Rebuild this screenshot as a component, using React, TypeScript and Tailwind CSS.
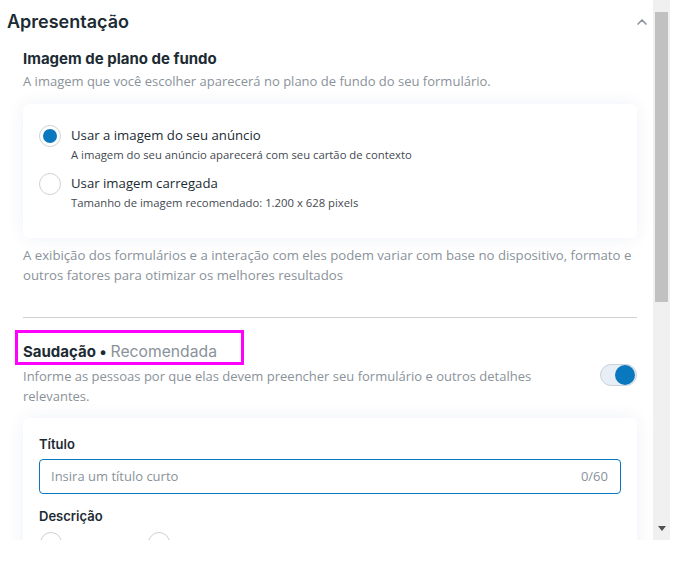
import { ChevronUp } from "lucide-react";

const body = { fontFamily: '"Open Sans", "Noto Sans", sans-serif' };
const head = { fontFamily: 'Inter, "Noto Sans", sans-serif' };

function Radio({ checked }: { checked?: boolean }) {
  return (
    <span className="flex h-[22px] w-[22px] shrink-0 items-center justify-center rounded-full border border-[#cbd2d9] bg-white">
      {checked && <span className="h-[14px] w-[14px] rounded-full bg-[#0a78be]" />}
    </span>
  );
}

function RadioOption({ checked, label, hint }: { checked?: boolean; label: string; hint: string }) {
  return (
    <div className="flex items-start gap-[10px]">
      <Radio checked={checked} />
      <div className="flex flex-col">
        <span className="text-[13.2px] leading-[20px] text-[#1c2b33]">{label}</span>
        <span className="text-[11.3px] leading-[20px] text-[#444950]">{hint}</span>
      </div>
    </div>
  );
}

export default function App() {
  return (
    <div className="flex h-[564px] w-[675px] items-start bg-white" style={body}>
      <div className="h-[540px] w-[653px] overflow-hidden">
        {/* Apresentação */}
        <div className="flex items-center justify-between pl-[7px] pr-[3px] pt-[10px]">
          <h1 className="text-[18px] font-semibold leading-[24px] text-[#1c2b33]" style={head}>
            Apresentação
          </h1>
          <ChevronUp size={16} strokeWidth={2.5} className="text-[#8d949e]" />
        </div>

        <div className="pl-[23px] pr-[16px]">
          <h2 className="mt-[15px] text-[15px] font-bold leading-[20px] text-[#1c2b33]" style={head}>
            Imagem de plano de fundo
          </h2>
          <p className="mt-[2px] text-[13px] leading-[20px] text-[#8a929a]">
            A imagem que você escolher aparecerá no plano de fundo do seu formulário.
          </p>

          <div className="mt-[13px] flex flex-col gap-[8px] rounded-[6px] bg-white px-[16px] pb-[25px] pt-[21px] shadow-[0_0_18px_rgba(30,60,140,0.07)]">
            <RadioOption
              checked
              label="Usar a imagem do seu anúncio"
              hint="A imagem do seu anúncio aparecerá com seu cartão de contexto"
            />
            <RadioOption
              label="Usar imagem carregada"
              hint="Tamanho de imagem recomendado: 1.200 x 628 pixels"
            />
          </div>

          <p className="mt-[7px] text-[13.2px] leading-[20px] text-[#8a929a]">
            A exibição dos formulários e a interação com eles podem variar com base no dispositivo, formato e outros fatores para otimizar os melhores resultados
          </p>

          <div className="mt-[32px] h-px bg-[#ced0d4]" />

          {/* Saudação */}
          <div className="mt-[12px] -ml-[8px] flex h-[35px] w-[229px] items-center border-[3px] border-[#ff00ff] pl-[5px] pt-[9px]">
            <span className="text-[15px] font-bold text-[#1c2b33]" style={head}>
              Saudação •
            </span>
            <span className="ml-[4px] text-[15.7px] text-[#8a929a]" style={head}>
              Recomendada
            </span>
          </div>
          <div className="mt-[1px] flex items-start justify-between">
            <p className="w-[540px] text-[13px] leading-[20px] text-[#8a929a]">
              Informe as pessoas por que elas devem preencher seu formulário e outros detalhes relevantes.
            </p>
            <span className="mt-[-2px] flex h-[22px] w-[37px] items-center justify-end rounded-full border border-[#cbd2d9] bg-[#e7eef5] pr-[1px]">
              <span className="h-[20px] w-[20px] rounded-full bg-[#0a78be]" />
            </span>
          </div>

          <div className="mt-[12px] rounded-[6px] bg-white px-[16px] pb-[20px] pt-[16px] shadow-[0_0_18px_rgba(30,60,140,0.07)]">
            <label className="block text-[13px] font-semibold leading-[20px] text-[#1c2b33]" style={head}>
              Título
            </label>
            <div className="mt-[5px] flex h-[35px] items-center justify-between rounded-[4px] border-[1.5px] border-[#0a78be] pl-[11px] pr-[12px]">
              <span className="text-[13px] text-[#8a929a]">Insira um título curto</span>
              <span className="text-[13px] text-[#8a929a]">0/60</span>
            </div>
            <label className="mt-[12px] block text-[13px] font-semibold leading-[20px] text-[#1c2b33]" style={head}>
              Descrição
            </label>
            <div className="mt-[6px] flex gap-[86px] pl-[1px]">
              <Radio />
              <Radio />
            </div>
          </div>
        </div>
      </div>

      {/* scrollbar */}
      <div className="flex h-[540px] w-[17px] flex-col items-center bg-[#f0f0f0]">
        <div className="h-[12px]" />
        <div className="h-[290px] w-[13px] bg-[#c1c1c1]" />
        <div className="flex-1" />
        <svg width="8" height="5" viewBox="0 0 8 5" className="mb-[9px]">
          <path d="M0 0h8L4 5z" fill="#505050" />
        </svg>
      </div>
    </div>
  );
}
